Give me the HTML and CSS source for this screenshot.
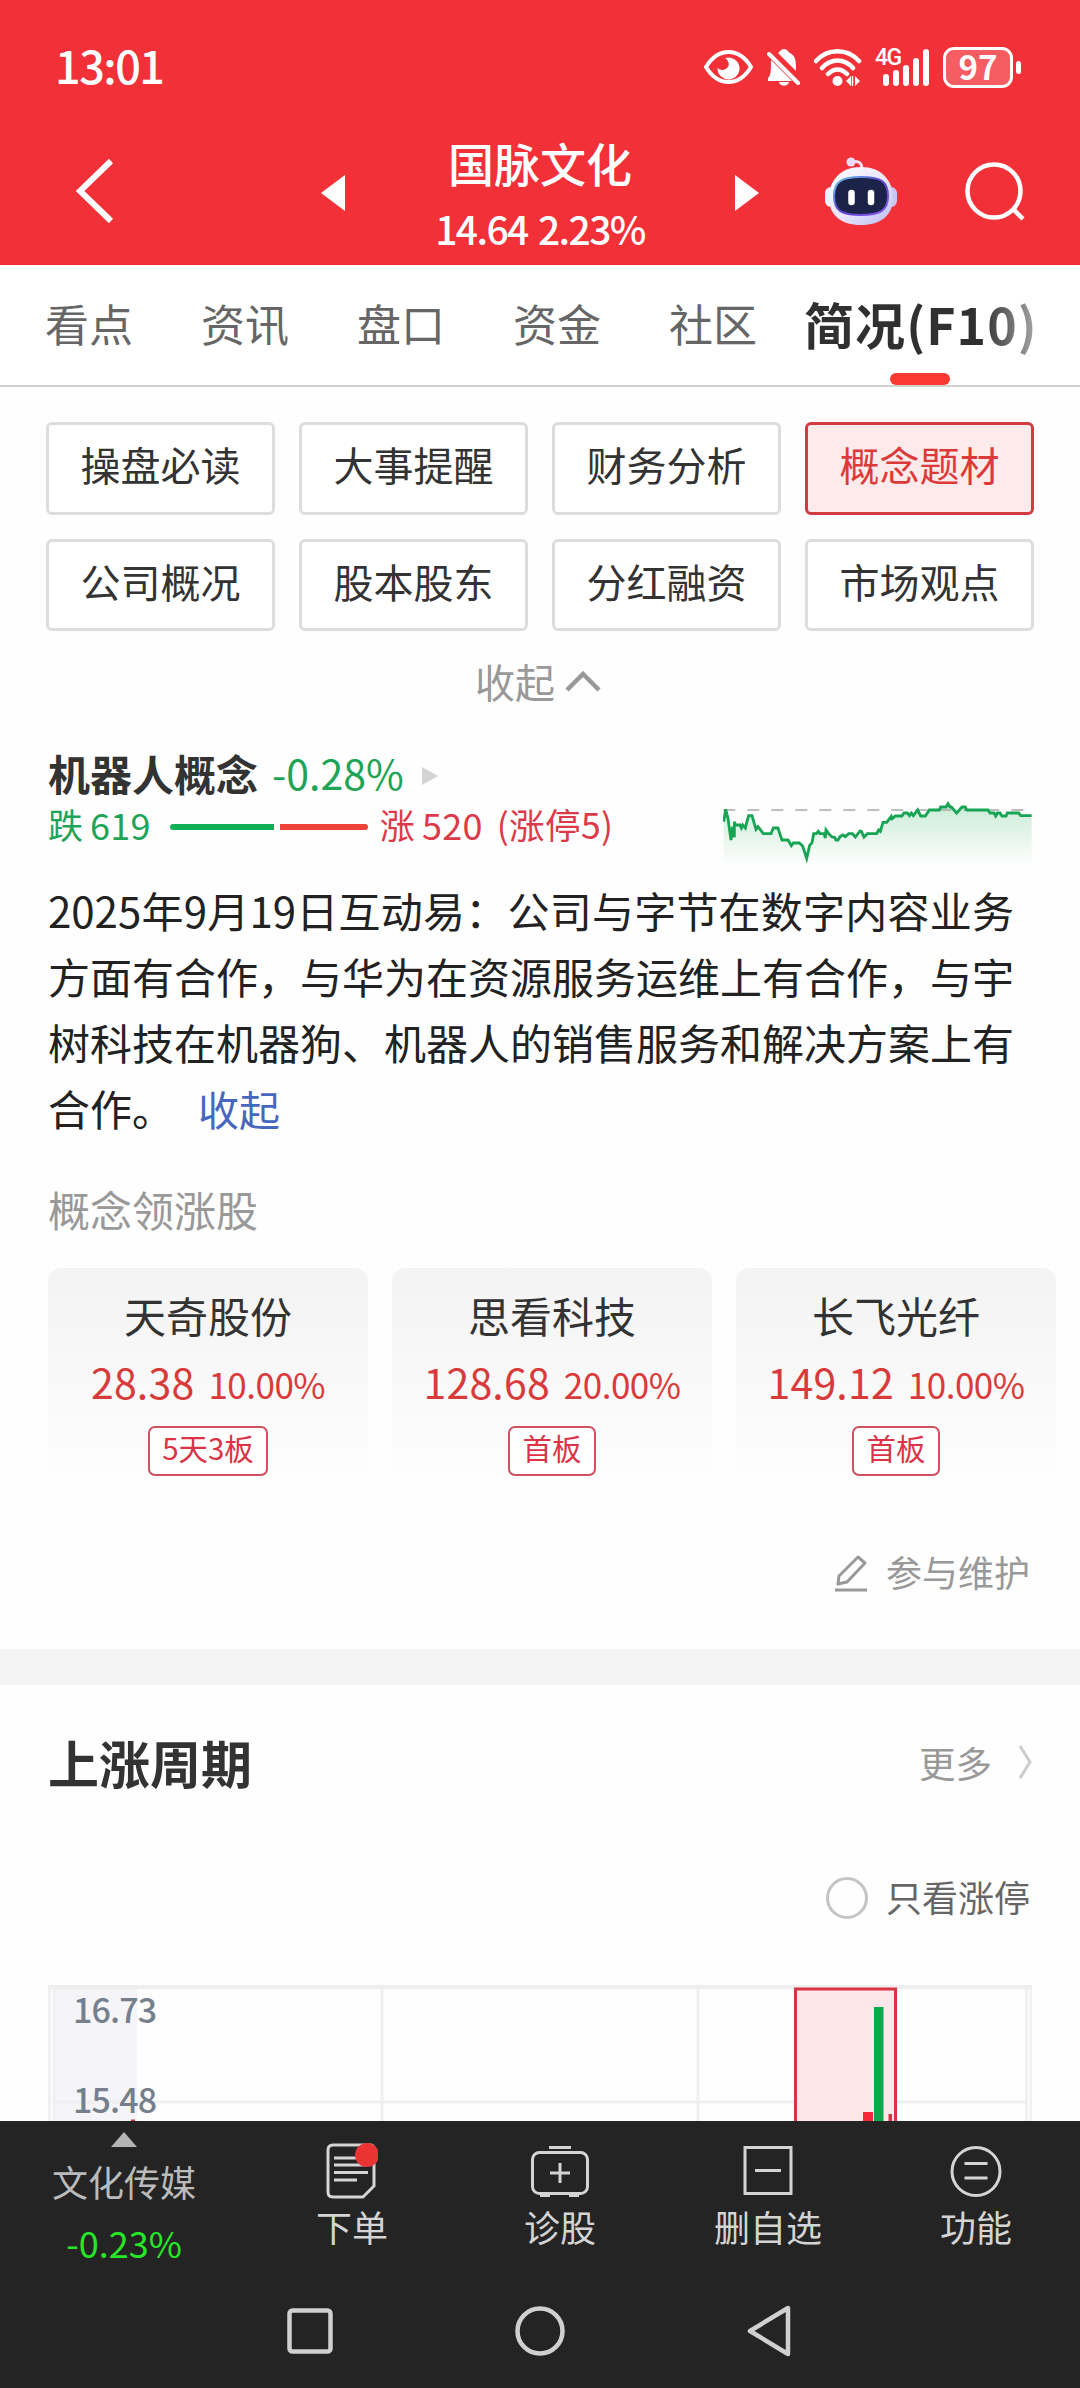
FILE: index.html
```html
<!DOCTYPE html>
<html lang="zh-CN">
<head>
    <meta charset="UTF-8">
    <title>国脉文化 - 简况</title>
    <link rel="stylesheet" href="styles.css">
</head>
<body>
    <header class="header">
        <div class="status">
            <div class="time">13:01</div>
            <div class="status-icons">
                <svg class="eye" width="49" height="34" viewBox="0 0 49 34" fill="none">
                    <path d="M2 17C14-3 35-3 47 17C35 37 14 37 2 17Z" stroke="#fff" stroke-width="4" stroke-linejoin="round"/>
                    <path d="M21 8A11 11 0 1 1 13.500 18A7 7 0 0 0 24 17C26 14 24 10 21 8Z" fill="#fff"/>
                </svg>
                <svg class="bell" width="33" height="37" viewBox="0 0 33 37">
                    <path d="M11 4C13 3 13.500 0 17 0S21 3 23 4C29 7 29 12 29 22ZM4 11L25 32H1V29C4 27 4 20 4 11ZM12 33H22C21 38 13 38 12 33Z" fill="#fff"/>
                    <path d="M2 5L31 34" stroke="#fff" stroke-width="4" stroke-linecap="round"/>
                </svg>
                <svg class="wifi" width="48" height="37" viewBox="0 0 48 37" fill="none">
                    <path d="M2 12C14-1 33-1 45 12M8 19C17 9 30 9 39 19M14 25C20 19 27 19 33 25" stroke="#fff" stroke-width="4.500" stroke-linecap="round"/>
                    <circle cx="23.500" cy="32" r="5" fill="#fff"/>
                    <path d="M37 27V37L32 32ZM41 27L46 32L41 37Z" fill="#fff"/>
                    <path d="M38.500 27V37" stroke="#fff" stroke-width="1.500"/>
                </svg>
                <div class="signal">
                    <span class="net">4G</span>
                    <svg width="46" height="37" viewBox="0 0 46 37" stroke="#fff" stroke-width="6" stroke-linecap="round">
                        <path d="M3 28V34M13 24V34M23 19V34M33 12V34M43 3V34"/>
                    </svg>
                </div>
                <div class="battery">97</div>
                <i class="battery-cap"></i>
            </div>
        </div>
        <div class="title-bar">
            <svg class="back" width="38" height="66" viewBox="0 0 38 66" fill="none">
                <path d="M35 3L4 33L35 63" stroke="#fff" stroke-width="6"/>
            </svg>
            <div class="stock">
                <svg width="24" height="36" viewBox="0 0 24 36"><path d="M24 0V36L0 18Z" fill="#fff"/></svg>
                <div class="stock-info">
                    <div class="stock-name">国脉文化</div>
                    <div class="stock-price">14.64 2.23%</div>
                </div>
                <svg width="24" height="36" viewBox="0 0 24 36"><path d="M0 0V36L24 18Z" fill="#fff"/></svg>
            </div>
            <div class="tools">
                <svg width="72" height="68" viewBox="0 0 72 68">
                    <defs>
                        <linearGradient id="shell" x1="0" y1="0" x2="1" y2="1">
                            <stop offset="0" stop-color="#fff"/>
                            <stop offset=".55" stop-color="#e9e4fa"/>
                            <stop offset="1" stop-color="#b9bdf2"/>
                        </linearGradient>
                        <linearGradient id="rim" x1="0" y1="0" x2="1" y2="1">
                            <stop offset="0" stop-color="#6fd0ee"/>
                            <stop offset=".5" stop-color="#5a3fd0"/>
                            <stop offset="1" stop-color="#8a5cf0"/>
                        </linearGradient>
                    </defs>
                    <path d="M27 5C34 3 37 6 37 13" fill="none" stroke="#f2dcee" stroke-width="3"/>
                    <circle cx="26" cy="5" r="4.500" fill="#efdcf2"/>
                    <rect x="0" y="30" width="12" height="20" rx="6" fill="#f3effc"/>
                    <rect x="60" y="30" width="12" height="20" rx="6" fill="#c9c5f4"/>
                    <path d="M36 10C56 10 68 23 68 41C68 58 56 68 36 68S4 58 4 41C4 23 16 10 36 10Z" fill="url(#shell)"/>
                    <path d="M36 20C55 20 63 24 63 39C63 54 55 58 36 58S9 54 9 39C9 24 17 20 36 20Z" fill="#1b2448" stroke="url(#rim)" stroke-width="2"/>
                    <path d="M26.500 36V45M46 36V45" stroke="#fff" stroke-width="6.500" stroke-linecap="round"/>
                </svg>
                <svg width="61" height="62" viewBox="0 0 61 62" fill="none" stroke="#fff" stroke-width="4.500">
                    <circle cx="29" cy="31" r="26.500"/>
                    <path d="M48 49L58 59"/>
                </svg>
            </div>
        </div>
    </header>

    <nav class="tabs">
        <div class="tab">看点</div>
        <div class="tab">资讯</div>
        <div class="tab">盘口</div>
        <div class="tab">资金</div>
        <div class="tab">社区</div>
        <div class="tab active"><span>简况(F10)</span></div>
    </nav>

    <main>
        <div class="menu">
            <div class="menu-item">操盘必读</div>
            <div class="menu-item">大事提醒</div>
            <div class="menu-item">财务分析</div>
            <div class="menu-item selected">概念题材</div>
            <div class="menu-item">公司概况</div>
            <div class="menu-item">股本股东</div>
            <div class="menu-item">分红融资</div>
            <div class="menu-item">市场观点</div>
        </div>
        <div class="fold">
            <span>收起</span>
            <svg width="36" height="21" viewBox="0 0 36 21" fill="none"><path d="M2 19L18 3L34 19" stroke="#999" stroke-width="4.500"/></svg>
        </div>

        <!-- 概念板块 -->
        <section class="concept">
            <div class="concept-head">
                <div>
                    <div class="concept-title">
                        <b>机器人概念</b>
                        <span class="concept-rate">-0.28%</span>
                        <svg width="18" height="20" viewBox="0 0 18 20"><path d="M1 1L17 10L1 19Z" fill="#d4d4d4"/></svg>
                    </div>
                    <div class="updown">
                        <span class="green">跌</span><span class="green count">619</span>
                        <i class="bar-down"></i><i class="bar-up"></i>
                        <span class="red">涨</span><span class="red count">520</span><span class="red limit">(涨停5)</span>
                    </div>
                </div>
                <svg class="spark" width="309" height="70" viewBox="69 57 927 210" fill="none">
                    <defs>
                        <linearGradient id="fade" x1="0" y1="0" x2="0" y2="1">
                            <stop offset="0" stop-color="#cdecd9"/>
                            <stop offset="1" stop-color="#fff"/>
                        </linearGradient>
                    </defs>
                    <path d="M71 125L77 88L84 115L93 180L98 140L103 172L105 135H138L146 107H156L166 142L174 140L190 161H213L220 144H234L246 180H264L274 194L280 189H298L308 198L320 235L329 196L336 188L341 161H372L377 170L382 161L396 171L410 180L424 170H438L446 161H457L466 171L480 153L492 171L502 161H530L549 127H560L574 114L586 108H606L612 99H622L630 106L640 104L653 90L662 108H676L688 90H718L722 81H754L770 99L786 81H796L800 90H864L870 99H900L906 108H918L922 99H956L962 107H995V262H71Z" fill="url(#fade)"/>
                    <path d="M70 90H970" stroke="#aaa" stroke-width="5" stroke-dasharray="36 36"/>
                    <path d="M71 125L77 88L84 115L93 180L98 140L103 172L103 125L106 135H120L124 144L128 135L136 144L138 135L146 107H156L168 148L174 140L190 161H213L220 144H234L240 163L246 180H264L274 197L280 189H298L308 198L320 235L329 196L336 188L341 161H349L355 154L360 161H372L376 174L378 150L386 161L396 171L404 172L408 180H414L420 170L429 165L436 170L446 161H457L466 171L480 153L484 154L492 171L502 161H530L536 150L541 154L549 127H560L574 109L577 116L586 108H606L612 99H622L628 107L634 99L640 107L653 90L662 108H676L688 90H718L722 81H738L744 71L750 81H754L770 99L786 81H796L800 90H864L870 99H882L887 108L892 99H900L906 108H918L922 99H956L962 107H995" stroke="#17a554" stroke-width="8.500"/>
                </svg>
            </div>
            <p class="desc">2025年9月19日互动易：公司与字节在数字内容业务方面有合作，与华为在资源服务运维上有合作，与宇树科技在机器狗、机器人的销售服务和解决方案上有合作。<a class="link">收起</a></p>
            <div class="sub-title">概念领涨股</div>
            <div class="cards">
                <div class="card">
                    <div class="card-name">天奇股份</div>
                    <div class="card-price">28.38<small>10.00%</small></div>
                    <div class="tag">5天3板</div>
                </div>
                <div class="card">
                    <div class="card-name">思看科技</div>
                    <div class="card-price">128.68<small>20.00%</small></div>
                    <div class="tag">首板</div>
                </div>
                <div class="card">
                    <div class="card-name">长飞光纤</div>
                    <div class="card-price">149.12<small>10.00%</small></div>
                    <div class="tag">首板</div>
                </div>
            </div>
            <div class="edit">
                <svg width="34" height="38" viewBox="0 0 34 38" fill="none" stroke="#999" stroke-width="3">
                    <path d="M24 3L31 9L13 28L4 30L5 22Z" stroke-linejoin="round"/>
                    <path d="M1 36H33"/>
                </svg>
                <span>参与维护</span>
            </div>
        </section>

        <!-- 上涨周期 -->
        <section class="cycle">
            <div class="cycle-head">
                <h2>上涨周期</h2>
                <div class="more">更多
                    <svg width="14" height="34" viewBox="0 0 14 34" fill="none"><path d="M2 1L12 17L2 33" stroke="#ccc" stroke-width="3"/></svg>
                </div>
            </div>
            <div class="filter"><i class="radio"></i><span>只看涨停</span></div>
            <svg class="chart" width="984" height="136" viewBox="0 0 984 136">
                <rect x="7" y="4" width="82" height="132" fill="#f5f5f9"/>
                <path d="M0 2H984" stroke="#eee" stroke-width="4"/>
                <path d="M1.500 0V136M6 4V136M334 4V136M650 4V136M978.500 4V136M983 4V136M6 117H978" stroke="#f0f0f0" stroke-width="3"/>
                <rect x="747.500" y="4" width="100" height="140" fill="#ffe7e9" stroke="#da3347" stroke-width="3"/>
                <rect x="815" y="127" width="10" height="9" fill="#f7273a"/>
                <rect x="826" y="22" width="9.500" height="114" fill="#0ba84c"/>
                <rect x="840.500" y="129" width="3.500" height="7" fill="#da3347"/>
                <rect x="83" y="134.500" width="4" height="1.500" fill="#da3347"/>
                <text x="25" y="37.500" class="axis">16.73</text>
                <text x="25" y="127.500" class="axis">15.48</text>
            </svg>
        </section>
    </main>

    <footer class="footer">
        <div class="actions">
            <div class="sector">
                <svg width="26" height="15" viewBox="0 0 26 15"><path d="M13 0L26 15H0Z" fill="#b4b4b4"/></svg>
                <div class="sector-name">文化传媒</div>
                <div class="sector-rate">-0.23%</div>
            </div>
            <div class="action">
                <svg width="52" height="56" viewBox="0 0 52 56" fill="none" stroke="#d4d4d4" stroke-width="3">
                    <path d="M7 2H44Q48 2 48 6V43L37 54H7Q2 54 2 49V7Q2 2 7 2Z"/>
                    <path d="M8 15H36M8 22H40M8 29.500H42M8 37H31"/>
                    <circle cx="41" cy="12" r="12" fill="#ea3333" stroke="none"/>
                </svg>
                <span>下单</span>
            </div>
            <div class="action">
                <svg width="58" height="56" viewBox="0 0 58 56" fill="none" stroke="#d4d4d4" stroke-width="3">
                    <rect x="1.500" y="9.500" width="55" height="41" rx="7"/>
                    <path d="M18 4.500H40M29 20V40M19 30H39M9 52.500H19M38 52.500H48"/>
                </svg>
                <span>诊股</span>
            </div>
            <div class="action">
                <svg width="50" height="56" viewBox="0 0 50 56" fill="none" stroke="#d4d4d4" stroke-width="3">
                    <rect x="2" y="4.500" width="46" height="46"/>
                    <path d="M12 27.500H38"/>
                </svg>
                <span>删自选</span>
            </div>
            <div class="action">
                <svg width="52" height="56" viewBox="0 0 52 56" fill="none" stroke="#d4d4d4" stroke-width="3">
                    <circle cx="26" cy="28.500" r="24"/>
                    <path d="M14.500 20.500H37.500M14.500 35H37.500"/>
                </svg>
                <span>功能</span>
            </div>
        </div>
        <div class="sys-nav">
            <svg width="46" height="46" viewBox="0 0 46 46" fill="none" stroke="#d0d0d0" stroke-width="4.500"><rect x="2.500" y="2.500" width="41" height="41" rx="3"/></svg>
            <svg width="50" height="50" viewBox="0 0 50 50" fill="none" stroke="#d0d0d0" stroke-width="4.500"><circle cx="25" cy="25" r="22.500"/></svg>
            <svg width="44" height="52" viewBox="0 0 44 52" fill="none" stroke="#d0d0d0" stroke-width="4.500" stroke-linejoin="round"><path d="M41 3V49L3 26Z"/></svg>
        </div>
    </footer>
</body>
</html>
```

FILE: styles.css
```css
* {
    box-sizing: border-box;
}

body {
    width: 1080px;
    height: 2388px;
    margin: 0;
    overflow: hidden;
    display: flex;
    flex-direction: column;
    background: #fefefe;
    color: #333;
    font-family: "Noto Sans CJK SC", sans-serif;
}

svg {
    display: block;
    flex: none;
}

i {
    display: block;
    flex: none;
}

.header {
    height: 265px;
    background: #f23038;
    color: #fff;
}

.status {
    height: 116px;
    padding: 18px 59px 0 55px;
    display: flex;
    align-items: center;
    justify-content: space-between;
}

.time {
    font-size: 45px;
    font-weight: 500;
    letter-spacing: -1.5px;
    line-height: 60px;
    margin-top: -4px;
}

.status-icons {
    display: flex;
    align-items: center;
}

.bell {
    margin-left: 14px;
}

.wifi {
    margin-left: 14px;
}

.signal {
    display: flex;
    position: relative;
    margin: 0 14px 0 21px;
}

.net {
    position: absolute;
    left: -8px;
    top: -4px;
    font-family: Roboto, sans-serif;
    font-size: 23px;
    font-weight: 500;
    line-height: 26px;
    letter-spacing: -1.5px;
}

.battery {
    width: 70px;
    height: 41px;
    border: 3px solid #fff;
    border-radius: 11px;
    background: #f65d63;
    font-size: 33px;
    font-weight: 700;
    line-height: 33px;
    text-align: center;
}

.battery-cap {
    width: 5px;
    height: 13px;
    margin-left: 3px;
    border-radius: 3px;
    background: #fff;
}

.title-bar {
    height: 149px;
    display: grid;
    grid-template-columns: 321px 438px 1fr;
    align-items: center;
}

.back {
    margin-left: 76px;
}

.stock {
    display: flex;
    align-items: center;
    justify-content: space-between;
    padding-top: 4px;
}

.stock-info {
    text-align: center;
    padding-top: 4px;
}

.stock-name {
    font-size: 46px;
    font-weight: 500;
    line-height: 66px;
}

.stock-price {
    font-size: 39px;
    font-weight: 500;
    line-height: 66px;
    letter-spacing: -1.6px;
    word-spacing: 3px;
}

.tools {
    display: flex;
    align-items: center;
    gap: 68px;
    padding-left: 66px;
}

.tabs {
    height: 122px;
    padding-left: 45px;
    display: flex;
    border-bottom: 2px solid #d0d0d0;
    background: #fff;
}

.tab {
    width: 156px;
    font-size: 44px;
    line-height: 116px;
    color: #666;
}

.tab.active {
    position: relative;
    width: 236px;
    margin-left: -21px;
    font-size: 50px;
    font-weight: 700;
    letter-spacing: 1.1px;
    white-space: nowrap;
}

.tab.active span {
    background: linear-gradient(90deg, #303030 76%, #aaa 100%);
    -webkit-background-clip: text;
    background-clip: text;
    color: transparent;
}

/* 选中下划线 */
.tab.active::after {
    content: "";
    position: absolute;
    left: 86px;
    bottom: 0;
    width: 60px;
    height: 12px;
    border-radius: 6px;
    background: #fa3a32;
}

main {
    height: 1734px;
    overflow: hidden;
}

.menu {
    display: grid;
    grid-template-columns: repeat(4, 1fr);
    gap: 24px;
    padding: 35px 46px 0;
}

.menu-item {
    height: 92.5px;
    border: 3px solid #ddd;
    border-radius: 6px;
    background: #fff;
    font-size: 40px;
    line-height: 78px;
    text-align: center;
}

.menu-item.selected {
    border-color: #d23c41;
    background: #fdeaea;
    color: #dc3a3a;
}

.fold {
    height: 40px;
    margin-top: 30px;
    padding-left: 475px;
    display: flex;
    align-items: center;
    gap: 10px;
    font-size: 40px;
    line-height: 40px;
    color: #999;
}

.concept {
    height: 984px;
    border-bottom: 36px solid #f4f4f4;
    padding-left: 48px;
}

.concept-head {
    height: 176px;
    display: flex;
    justify-content: space-between;
    padding: 39px 48px 0 0;
}

.concept-title {
    display: flex;
    align-items: center;
    height: 64px;
    font-size: 42px;
}

.concept-title b {
    font-weight: 600;
}

.concept-title svg {
    margin-top: 8px;
}

.concept-rate {
    margin: 0 17px 0 14px;
    color: #1ea456;
    font-size: 41px;
}

.updown {
    display: flex;
    align-items: center;
    height: 40px;
    margin-top: 1px;
    font-size: 35px;
    line-height: 40px;
}

.updown span {
    margin-top: -2px;
}

.green {
    color: #1ea456;
}

.red {
    color: #dc3a48;
}

.count {
    margin-left: 7px;
    font-size: 36px;
    letter-spacing: 0.3px;
}

.limit {
    margin-left: 14px;
    font-size: 35.500px;
    letter-spacing: 0.4px;
}

.bar-down,
.bar-up {
    height: 6px;
    margin-top: 3px;
}

.bar-down {
    width: 104px;
    margin-left: 19px;
    margin-right: 6px;
    border-radius: 3px 0 0 3px;
    background: #0eaf55;
}

.bar-up {
    width: 88px;
    margin-right: 12px;
    border-radius: 0 3px 3px 0;
    background: #ee4238;
}

.spark {
    margin-top: 59px;
}

.desc {
    width: 966px;
    margin: 0;
    font-size: 42px;
    line-height: 66px;
    text-align: justify;
    color: #222;
}

.link {
    margin-left: 24px;
    font-size: 41px;
    color: #4767bf;
}

.sub-title {
    margin-top: 37px;
    font-size: 42px;
    line-height: 62px;
    color: #999;
}

.cards {
    display: flex;
    gap: 24px;
    margin-top: 28px;
}

.card {
    flex: none;
    width: 320px;
    height: 220px;
    padding-top: 15px;
    border-radius: 14px 14px 0 0;
    background: linear-gradient(#f3f3f3, #fefefe);
    text-align: center;
}

.card-name {
    font-size: 42px;
    line-height: 64px;
}

.card-price {
    font-size: 41px;
    line-height: 68px;
    letter-spacing: 0.2px;
    color: #d93a3a;
}

.card-price small {
    margin-left: 14px;
    font-size: 35px;
    letter-spacing: -0.5px;
}

.tag {
    display: inline-block;
    height: 50px;
    margin-top: 8px;
    padding: 0 12px;
    border: 2px solid #d0505e;
    border-radius: 7px;
    background: #fff;
    font-size: 29.500px;
    line-height: 39px;
    color: #dc3346;
    vertical-align: top;
}

.edit {
    display: flex;
    justify-content: flex-end;
    align-items: center;
    gap: 18px;
    height: 54px;
    margin: 58px 50px 0 0;
    font-size: 36px;
    color: #999;
}

.edit span {
    margin-top: -4px;
}

.cycle {
    padding: 0 48px;
}

.cycle-head {
    display: flex;
    justify-content: space-between;
    align-items: center;
    height: 154px;
}

.cycle-head h2 {
    margin: 0;
    font-size: 51px;
    font-weight: 600;
}

.more {
    display: flex;
    align-items: center;
    gap: 26px;
    font-size: 36.500px;
    color: #999;
}

.filter {
    display: flex;
    justify-content: flex-end;
    align-items: center;
    gap: 18px;
    height: 60px;
    margin: 29px 2px 57px 0;
    font-size: 36px;
    color: #666;
}

.filter span {
    margin-top: -5px;
}

.radio {
    width: 42px;
    height: 42px;
    border: 3px solid #c4c4c4;
    border-radius: 50%;
}

.axis {
    font-size: 34px;
    font-weight: 500;
    letter-spacing: -0.9px;
    fill: #76808d;
}

.footer {
    height: 267px;
    background: #242424;
    color: #d4d4d4;
    font-size: 36px;
}

.actions {
    display: grid;
    grid-template-columns: 248px repeat(4, 208px);
    height: 160px;
}

.sector {
    display: flex;
    flex-direction: column;
    align-items: center;
    padding-top: 11px;
}

.sector-name {
    margin-top: 3px;
    line-height: 62px;
    color: #bbb;
}

.sector-rate {
    line-height: 60px;
    font-size: 36px;
    color: #26e626;
}

.action {
    display: flex;
    flex-direction: column;
    align-items: center;
    padding-top: 22px;
}

.action span {
    line-height: 54px;
}

.sys-nav {
    display: flex;
    justify-content: center;
    align-items: center;
    gap: 182px;
    height: 100px;
    padding-right: 3px;
}
```
